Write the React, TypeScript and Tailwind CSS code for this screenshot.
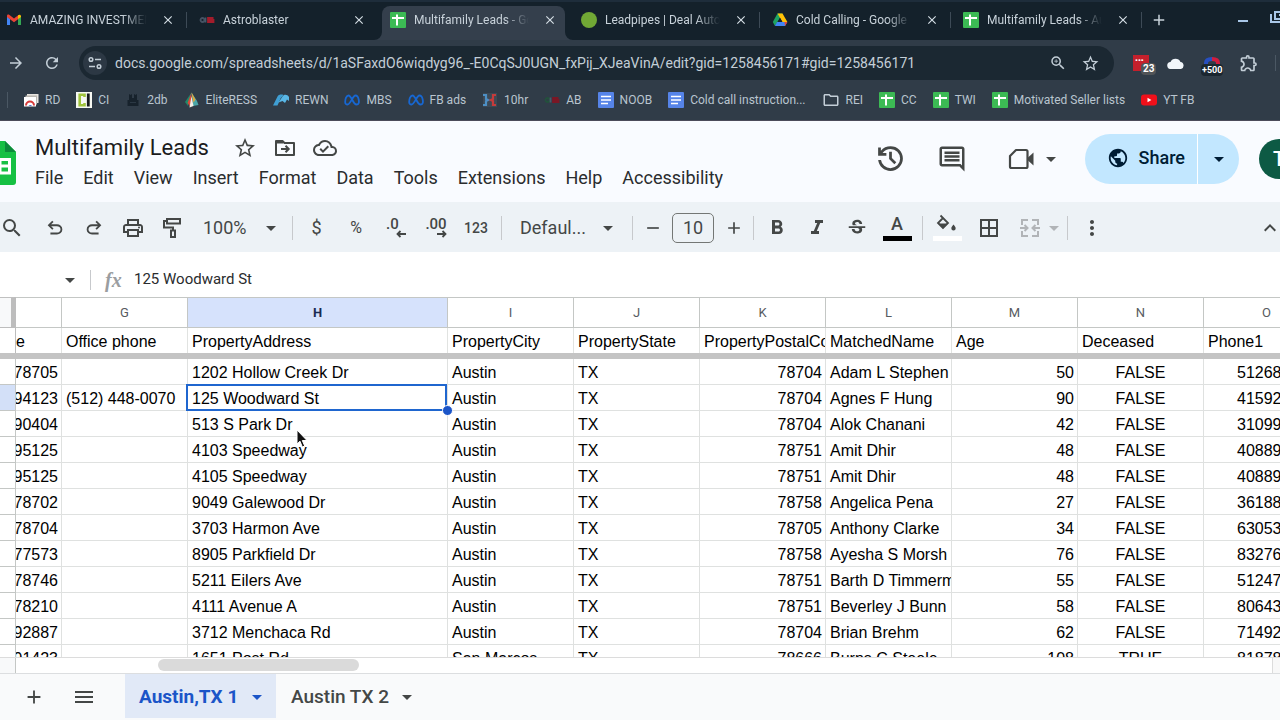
import type { ReactNode } from "react";
import clsx from "clsx";
import {
  MdAdd,
  MdArrowDropDown,
  MdArrowForward,
  MdBorderAll,
  MdClose,
  MdFormatBold,
  MdFormatItalic,
  MdKeyboardArrowUp,
  MdMenu,
  MdMoreVert,
  MdOutlineCloudDone,
  MdOutlineComment,
  MdOutlineExtension,
  MdOutlineFolder,
  MdOutlinePrint,
  MdPublic,
  MdRefresh,
  MdRemove,
  MdSearch,
  MdStarBorder,
  MdStrikethroughS,
  MdZoomIn,
} from "react-icons/md";

/* ---------- favicons ---------- */

const SheetsFavicon = () => (
  <svg viewBox="0 0 16 16" className="size-4 shrink-0">
    <rect width="16" height="16" rx="1" fill="#3cba54" />
    <path d="M2 6h12M7 2.500v11" stroke="#fff" strokeWidth="2" />
  </svg>
);

const DocsFavicon = () => (
  <svg viewBox="0 0 16 16" className="size-4 shrink-0">
    <rect width="16" height="16" rx="1" fill="#5684e8" />
    <path d="M3 4.500h10M3 8h10M3 11.500h7" stroke="#fff" strokeWidth="1.600" />
  </svg>
);

const GmailFavicon = () => (
  <svg viewBox="0 0 16 16" className="size-4 shrink-0">
    <path d="M1 13V4.500L4 7v6z" fill="#4285f4" />
    <path d="M15 13V4.500L12 7v6z" fill="#34a853" />
    <path d="M1 5V4c0-1.500 1.500-1.800 2.500-1L8 6.500 12.500 3 12 7.200 8 10.200 4 7.200z" fill="#ea4335" />
    <path d="M12 7.200V3.300c1.300-1.200 3-.6 3 .9V5z" fill="#fbbc04" />
  </svg>
);

const AstroFavicon = ({ dim = false }: { dim?: boolean }) => (
  <svg viewBox="0 0 16 16" className="size-4 shrink-0" fill="none" strokeWidth="1.800">
    <circle cx="3.500" cy="8" r="2" stroke={dim ? "#23513c" : "#455263"} />
    <path d="M6.500 10.500V5.500" stroke="#46596b" />
    <path d="M14.500 6H9v4h5.500V8H9" stroke={dim ? "#7a1725" : "#a31c2b"} />
  </svg>
);

const DriveFavicon = () => (
  <svg viewBox="0 0 16 16" className="size-4 shrink-0">
    <path d="M5.500 1.500h5L5.500 10 3 14 .8 10z" fill="#1ea362" />
    <path d="M5.500 1.500h5l4.900 8.500h-5z" fill="#ffc107" />
    <path d="M5 10h10.400L13 14H2.900z" fill="#4285f4" />
    <path d="M8 5.800L10.400 10H5.600z" fill="#14212b" />
    <path d="M12.500 10h2.900L13 14z" fill="#ea4335" />
  </svg>
);

const LeadpipesFavicon = () => <span className="size-4 shrink-0 rounded-full bg-[#71a835]" />;

const MetaIcon = () => (
  <svg viewBox="0 0 16 16" className="size-4 shrink-0" fill="none" stroke="#1767d2" strokeWidth="1.800">
    <path d="M1.200 10.500C1 7 2.500 3.500 4.500 3.500c3 0 4.500 9 8 9 2.500 0 2.700-2.500 2.200-5C14.200 5 13 3.500 11.500 3.500c-3 0-4.800 9-8 9-1.300 0-2.200-.8-2.300-2z" />
  </svg>
);

const RdIcon = () => (
  <svg viewBox="0 0 16 16" className="size-4 shrink-0">
    <rect x="4" y="2" width="11.500" height="9" fill="#e7e4df" />
    <rect x="2.500" y="3.500" width="11.500" height="9" fill="#b9b6b0" />
    <rect x="1" y="5" width="12" height="9.500" fill="#fff" />
    <path d="M3 13.500a4 4 0 0 1 8 0" fill="none" stroke="#d63a3a" strokeWidth="2" />
    <path d="M5.500 14a2 2 0 0 1 3.500 0z" fill="#4a6fd0" />
  </svg>
);

const CiIcon = () => (
  <svg viewBox="0 0 16 16" className="size-4 shrink-0">
    <rect width="16" height="16" fill="#f6f8f2" />
    <path d="M8.500 5V2.800H3.700v10.400h4.800V11" fill="none" stroke="#9fc33b" strokeWidth="2.600" />
    <path d="M12.300 1.500v13" stroke="#161a1c" strokeWidth="2.800" />
  </svg>
);

const DbIcon = () => (
  <svg viewBox="0 0 16 16" className="size-4 shrink-0" fill="#17222c">
    <path d="M4 2l1.500 1 1.500-1v4h2V2l1.500 1L12 2v6H4zM2.500 8h11v6h-11z" />
    <path d="M5 10.500h6" stroke="#2b3844" />
  </svg>
);

const EliteIcon = () => (
  <svg viewBox="0 0 16 16" className="size-4 shrink-0">
    <path d="M7.500.5L1 10l3 4z" fill="#1f8a6a" />
    <path d="M7.500.5L3.500 11l3.500 4.500z" fill="#d8483a" />
    <path d="M7.500.5l5.500 8.500 1.500 4L9 14z" fill="#4aa6a8" />
    <path d="M7.500.5l4 7-2 3z" fill="#e0a93a" />
    <path d="M7.500 4L5.500 15.500l4-1.500z" fill="#f4efe6" />
  </svg>
);

const RewnIcon = () => (
  <svg viewBox="0 0 16 16" className="size-4 shrink-0">
    <path d="M0 13.500L4.500 4.500c1-2 4-2.500 6-1.500L7.500 6.500 4.500 13.500z" fill="#3f9fd4" />
    <path d="M5.500 10.500L9.500 4.500c1.500-2.500 5-2 6.500.5v4l-2-1.500-2 3.500-2.500-2z" fill="#59b7e6" />
  </svg>
);

const TenHrIcon = () => (
  <svg viewBox="0 0 16 16" className="size-4 shrink-0" fill="none" strokeWidth="2.200">
    <rect x="1" y="1" width="14" height="14" fill="#3d4955" />
    <path d="M1 3h3v4l2 1-2 1v4H1" stroke="#4d8fc4" />
    <path d="M14 3h-3v4L9 8l2 1v4h3" stroke="#c43b3b" />
  </svg>
);

const YoutubeIcon = () => (
  <svg viewBox="0 0 16 16" className="size-4 shrink-0">
    <rect y="2.500" width="16" height="11" rx="3" fill="#f0101a" />
    <path d="M6.500 5.700v4.600L10.400 8z" fill="#fff" />
  </svg>
);

/* ---------- drawn toolbar icons ---------- */

const SheetsLogo = () => (
  <svg viewBox="0 0 32 44" className="-ml-4 h-11 w-8 shrink-0">
    <path d="M3 0h18l11 11v30a3 3 0 0 1-3 3H3a3 3 0 0 1-3-3V3a3 3 0 0 1 3-3z" fill="#16c043" />
    <path d="M21 0l11 11H21z" fill="#0c8a3a" />
    <path d="M7 18.500h18.500v13.500H7zM7 25h18.500M16 18.500V32" fill="none" stroke="#fff" strokeWidth="3" />
  </svg>
);

const UndoIcon = ({ flip = false }: { flip?: boolean }) => (
  <svg viewBox="0 0 24 24" className={clsx("size-[22px]", flip && "-scale-x-100")} fill="currentColor">
    <path d="M7 19v-2h7.100q1.575 0 2.738-1T18 13.500T16.838 11T14.100 10H7.800l2.600 2.600L9 14L4 9l5-5l1.400 1.400L7.800 8h6.300q2.425 0 4.163 1.575T20 13.500t-1.737 3.925T14.100 19z" />
  </svg>
);

const HistoryIcon = () => (
  <svg viewBox="0 0 24 24" className="size-[33px]" fill="currentColor">
    <path d="M12 21q-3.450 0-6.012-2.287T3.050 13H5.100q.35 2.600 2.313 4.300T12 19q2.925 0 4.963-2.037T19 12t-2.037-4.962T12 5q-1.725 0-3.225.8T6.250 8H9v2H3V4h2v2.350q1.275-1.600 3.113-2.475T12 3q1.875 0 3.513.713t2.850 1.924t1.925 2.850T21 12t-.712 3.513t-1.925 2.850t-2.850 1.925T12 21m2.800-4.800L11 12.400V7h2v4.600l3.200 3.200z" />
  </svg>
);

const FolderMoveIcon = () => (
  <svg viewBox="0 0 24 24" className="size-6" fill="none" stroke="currentColor" strokeWidth="2">
    <path d="M3 5h6.500l2 2H21v12H3z" strokeLinejoin="round" />
    <path d="M3 6h7" strokeWidth="3" />
    <path d="M8 13h7M12.500 9.800l3.200 3.200-3.200 3.200" />
  </svg>
);

const MeetIcon = () => (
  <svg viewBox="0 0 28 24" className="h-6 w-7">
    <path d="M9 3h10a1.500 1.500 0 0 1 1.500 1.500v15A1.500 1.500 0 0 1 19 21H4.500A1.500 1.500 0 0 1 3 19.500V9z" fill="none" stroke="currentColor" strokeWidth="2.200" strokeLinejoin="round" />
    <path d="M21 10.500l5.500-5v13L21 13.500z" fill="currentColor" />
  </svg>
);

const RollerIcon = () => (
  <svg viewBox="0 0 24 24" className="size-6" fill="none" stroke="currentColor" strokeWidth="2">
    <path d="M7 3h13v4.500H7zM7 5H4v6.500h9V14M11 14.500h4V21h-4z" />
  </svg>
);

const BucketIcon = () => (
  <svg viewBox="0 0 24 20" className="h-5 w-6">
    <path d="M5.500 1.500L13 9l-5 5-5-5 5.500-5.500" fill="none" stroke="currentColor" strokeWidth="1.800" />
    <path d="M3 9.500h10L8 14.500z" fill="currentColor" />
    <path d="M18.500 10.500c1.500 1.800 2.200 2.800 2.200 3.700a2.200 2.200 0 0 1-4.400 0c0-.9.700-1.900 2.200-3.700z" fill="currentColor" />
  </svg>
);

const MergeIcon = () => (
  <svg viewBox="0 0 24 24" className="size-6" fill="none" stroke="currentColor" strokeWidth="2">
    <path d="M10 4H4v5M14 4h6v5M4 15v5h6M20 15v5h-6M2 12h7M6.500 9l3 3-3 3M22 12h-7M17.500 9l-3 3 3 3" />
  </svg>
);

const TuneIcon = () => (
  <svg viewBox="0 0 16 16" className="size-4" fill="none" stroke="currentColor" strokeWidth="1.500">
    <circle cx="4" cy="4.500" r="1.800" />
    <circle cx="12" cy="11.500" r="1.800" />
    <path d="M8 4.500h6M2 11.500h6" />
  </svg>
);

const DecimalIcon = ({ digits, right = false }: { digits: string; right?: boolean }) => (
  <span className="flex h-6 flex-col text-left">
    <span className="text-[15px] leading-4 font-medium">{digits}</span>
    <svg viewBox="0 0 10 8" className={clsx("-mt-0.5 h-2 w-2.5 self-end", !right && "ml-2.5")} fill="none" stroke="currentColor" strokeWidth="1.800">
      <path d={right ? "M0 4h9M5.500 1l3 3-3 3" : "M10 4H1M4.500 1l-3 3 3 3"} />
    </svg>
  </span>
);

/* ---------- browser chrome ---------- */

type BrowserTab = { title: string; icon: ReactNode; active?: boolean; divider?: boolean };

const browserTabs: BrowserTab[] = [
  { title: "AMAZING INVESTMENT", icon: <GmailFavicon />, divider: true },
  { title: "Astroblaster", icon: <AstroFavicon /> },
  { title: "Multifamily Leads - Goo", icon: <SheetsFavicon />, active: true },
  { title: "Leadpipes | Deal Autom", icon: <LeadpipesFavicon />, divider: true },
  { title: "Cold Calling - Google D", icon: <DriveFavicon />, divider: true },
  { title: "Multifamily Leads - Aus", icon: <SheetsFavicon />, divider: true },
];

const TabStrip = () => (
  <div className="flex h-10 items-center border-t-2 border-[#1e2d3b] bg-[#14212b]">
    {browserTabs.map((tab, i) => (
      <div
        key={tab.title}
        className={clsx("relative flex h-full items-center pr-3 pb-0.5", i === 0 ? "w-[187px] pl-1.5" : "w-[191px] pl-3")}
      >
        {tab.active && (
          <>
            <span className="absolute inset-x-1 top-1 bottom-0 rounded-t-lg bg-[#343f4c]" />
            <svg viewBox="0 0 8 8" className="absolute bottom-0 -left-1 size-2" fill="#343f4c">
              <path d="M8 0v8H0a8 8 0 0 0 8-8z" />
            </svg>
            <svg viewBox="0 0 8 8" className="absolute -right-1 bottom-0 size-2" fill="#343f4c">
              <path d="M0 0v8h8a8 8 0 0 1-8-8z" />
            </svg>
          </>
        )}
        <div className="relative flex min-w-0 flex-1 items-center gap-2">
          {tab.icon}
          <span className="min-w-0 flex-1 overflow-hidden mask-r-from-75% mask-r-to-95% text-xs whitespace-nowrap text-[#c8d2da]">
            {tab.title}
          </span>
          <button aria-label={`Close ${tab.title}`} className="text-[#d5dee5]">
            <MdClose className="size-3.5" />
          </button>
        </div>
        {tab.divider && <span className="absolute top-2.5 right-0 h-4 w-px bg-[#3d4a56]" />}
      </div>
    ))}
    <button aria-label="New tab" className="ml-2 pb-0.5 text-[#c8d2da]">
      <MdAdd className="size-[18px]" />
    </button>
    <div className="-mr-1.5 ml-auto flex items-center gap-[22px] text-[#a9c7e8]">
      <button aria-label="Minimize" className="h-0.5 w-2.5 bg-current" />
      <button aria-label="Restore" className="-mt-2">
        <svg viewBox="0 0 16 12" className="h-3 w-4" fill="none" stroke="currentColor" strokeWidth="2">
          <path d="M5 1h10v7H5zM1 3v8h10M9 4h4" />
        </svg>
      </button>
    </div>
  </div>
);

const AddressBar = () => (
  <div className="flex h-[46px] items-center bg-[#303c48] text-[#c3ced7]">
    <button aria-label="Forward" className="ml-[7px]">
      <MdArrowForward className="size-[18px]" />
    </button>
    <button aria-label="Reload" className="ml-[18px]">
      <MdRefresh className="size-[18px]" />
    </button>
    <div className="ml-[18px] flex h-[34px] min-w-0 flex-1 items-center rounded-full bg-[#1b2832] pr-3.5 pl-1">
      <button aria-label="View site information" className="flex size-6 items-center justify-center rounded-full bg-[#2c3844]">
        <TuneIcon />
      </button>
      <input
        aria-label="Address"
        className="ml-2 min-w-0 flex-1 bg-transparent text-sm text-[#c3ced7] outline-none"
        defaultValue="docs.google.com/spreadsheets/d/1aSFaxdO6wiqdyg96_-E0CqSJ0UGN_fxPij_XJeaVinA/edit?gid=1258456171#gid=1258456171"
      />
      <button aria-label="Zoom">
        <MdZoomIn className="size-[18px]" />
      </button>
      <button aria-label="Bookmark this page" className="ml-3.5">
        <MdStarBorder className="size-[19px]" />
      </button>
    </div>
    <div className="ml-[19px] flex items-center gap-[18px]">
      <button aria-label="Password manager" className="relative size-4 bg-[#c4202c]">
        <span className="absolute top-0 left-0.5 text-[8px] leading-3 font-bold text-white">•••</span>
        <span className="absolute top-2 left-2 rounded-sm bg-[#515457] px-0.5 text-[10px] leading-3 font-bold text-white">23</span>
      </button>
      <button aria-label="Cloud">
        <svg viewBox="0 0 18 12" className="h-3 w-[18px]" fill="#f1f6fa">
          <path d="M4 12a3.500 3.500 0 0 1-.5-7A5.500 5.500 0 0 1 13.500 5 3.600 3.600 0 0 1 14 12z" />
        </svg>
      </button>
      <button aria-label="Magnet" className="relative size-[18px]">
        <svg viewBox="0 0 18 12" className="h-3 w-[18px]" fill="none" strokeWidth="4">
          <path d="M3 10V6q0-4 6-4" stroke="#274fc0" />
          <path d="M9 2q6 0 6 4v4" stroke="#d01d3f" />
        </svg>
        <span className="absolute top-2.5 -left-0.5 rounded-sm bg-[#1b2630] px-px text-[9px] leading-3 font-bold text-white">+500</span>
      </button>
      <button aria-label="Extensions">
        <MdOutlineExtension className="size-5" />
      </button>
    </div>
    <span className="mr-1 ml-4 h-4 w-px bg-[#4b5864]" />
  </div>
);

const bookmarks: { label: string; icon: ReactNode }[] = [
  { label: "RD", icon: <RdIcon /> },
  { label: "CI", icon: <CiIcon /> },
  { label: "2db", icon: <DbIcon /> },
  { label: "EliteRESS", icon: <EliteIcon /> },
  { label: "REWN", icon: <RewnIcon /> },
  { label: "MBS", icon: <MetaIcon /> },
  { label: "FB ads", icon: <MetaIcon /> },
  { label: "10hr", icon: <TenHrIcon /> },
  { label: "AB", icon: <AstroFavicon dim /> },
  { label: "NOOB", icon: <DocsFavicon /> },
  { label: "Cold call instruction...", icon: <DocsFavicon /> },
  { label: "REI", icon: <MdOutlineFolder className="size-[18px] text-[#c3ced7]" /> },
  { label: "CC", icon: <SheetsFavicon /> },
  { label: "TWI", icon: <SheetsFavicon /> },
  { label: "Motivated Seller lists", icon: <SheetsFavicon /> },
  { label: "YT FB", icon: <YoutubeIcon /> },
];

const BookmarksBar = () => (
  <nav className="flex items-center gap-4 overflow-hidden border-b border-[#4c4b5a] bg-[#303c48] pb-1.5 pl-[7px]">
    <span className="-mr-px h-4 w-px shrink-0 bg-[#4b5864]" />
    {bookmarks.map((b) => (
      <a key={b.label} href="#" className="flex h-7 shrink-0 items-center gap-1.5 text-xs text-[#b9c5cf]">
        {b.icon}
        {b.label}
      </a>
    ))}
  </nav>
);

/* ---------- document header ---------- */

const menus = ["File", "Edit", "View", "Insert", "Format", "Data", "Tools", "Extensions", "Help", "Accessibility"];

const DocHeader = () => (
  <header className="flex h-[81px] shrink-0 items-start bg-[#f9fbff] text-[#444746]">
    <div className="mt-5">
      <SheetsLogo />
    </div>
    <div className="ml-[19px] pt-2.5">
      <div className="flex h-[34px] items-center gap-4">
        <input
          aria-label="Rename"
          className="w-[182px] bg-transparent pb-0.5 text-[22px] text-[#1b1b1d] outline-none"
          defaultValue="Multifamily Leads"
        />
        <button aria-label="Star">
          <MdStarBorder className="size-6" />
        </button>
        <button aria-label="Move">
          <FolderMoveIcon />
        </button>
        <button aria-label="See document status">
          <MdOutlineCloudDone className="size-6" />
        </button>
      </div>
      <nav className="flex h-[26px] items-center gap-5 text-lg text-[#2a2c2e]">
        {menus.map((m) => (
          <button key={m}>{m}</button>
        ))}
      </nav>
    </div>
    <div className="-mr-[19px] ml-auto flex h-[75px] shrink-0 items-center">
      <button aria-label="Version history">
        <HistoryIcon />
      </button>
      <button aria-label="Comments" className="ml-[30px]">
        <MdOutlineComment className="size-[30px]" />
      </button>
      <button aria-label="Start a call" className="ml-10 flex items-center gap-1">
        <MeetIcon />
        <MdArrowDropDown className="size-6" />
      </button>
      <div className="ml-[22px] flex h-[50px] overflow-hidden rounded-full bg-[#c2e7ff] text-[#001d35]">
        <button className="flex items-center gap-2.5 pr-3 pb-0.5 pl-[22px] text-lg font-medium">
          <MdPublic className="size-[22px]" />
          Share
        </button>
        <button aria-label="Quick sharing actions" className="w-[42px] border-l border-white">
          <MdArrowDropDown className="mx-auto size-6" />
        </button>
      </div>
      <button aria-label="Account" className="ml-5 size-10 rounded-full bg-[#0d5a44] text-xl font-medium text-white">
        T
      </button>
    </div>
  </header>
);

/* ---------- toolbar ---------- */

const Divider = () => <span className="h-6 w-px shrink-0 bg-[#c7c9cc]" />;

const ToolButton = ({ label, className, children }: { label: string; className?: string; children: ReactNode }) => (
  <button aria-label={label} className={clsx("flex h-10 shrink-0 items-center justify-center", className ?? "w-10")}>
    {children}
  </button>
);

const Toolbar = () => (
  <div className="flex h-[50px] shrink-0 items-center bg-[#edf2f6] pt-px text-[#444746]">
    <ToolButton label="Search the menus" className="w-[35px] pr-[11px]">
      <MdSearch className="size-6" />
    </ToolButton>
    <ToolButton label="Undo" className="w-[39px]">
      <UndoIcon />
    </ToolButton>
    <ToolButton label="Redo" className="w-[39px]">
      <UndoIcon flip />
    </ToolButton>
    <ToolButton label="Print" className="w-[39px]">
      <MdOutlinePrint className="size-6" />
    </ToolButton>
    <ToolButton label="Paint format" className="w-[39px]">
      <RollerIcon />
    </ToolButton>
    <div className="relative ml-3 flex items-center">
      <select aria-label="Zoom" className="w-20 appearance-none bg-transparent text-lg outline-none">
        <option>100%</option>
      </select>
      <MdArrowDropDown className="pointer-events-none absolute right-0 size-6" />
    </div>
    <span className="w-[9px]" />
    <Divider />
    <span className="w-1" />
    <ToolButton label="Format as currency" className="w-[39px]">
      <span className="text-lg">$</span>
    </ToolButton>
    <ToolButton label="Format as percent">
      <span className="text-base">%</span>
    </ToolButton>
    <ToolButton label="Decrease decimal places">
      <DecimalIcon digits=".0" />
    </ToolButton>
    <ToolButton label="Increase decimal places">
      <DecimalIcon digits=".00" right />
    </ToolButton>
    <ToolButton label="More formats">
      <span className="text-sm font-medium">123</span>
    </ToolButton>
    <span className="w-[5px]" />
    <Divider />
    <div className="relative ml-[18px] flex items-center">
      <select aria-label="Font" className="w-[100px] appearance-none bg-transparent text-lg outline-none">
        <option>Defaul...</option>
      </select>
      <MdArrowDropDown className="pointer-events-none absolute right-0 size-6" />
    </div>
    <span className="w-3" />
    <Divider />
    <ToolButton label="Decrease font size" className="w-[39px]">
      <MdRemove className="size-5" />
    </ToolButton>
    <input
      aria-label="Font size"
      className="h-[30px] w-[42px] shrink-0 rounded-[5px] border border-[#747775] bg-transparent text-center text-lg outline-none"
      defaultValue="10"
    />
    <ToolButton label="Increase font size" className="w-[39px]">
      <MdAdd className="size-5" />
    </ToolButton>
    <Divider />
    <span className="w-[3px]" />
    <ToolButton label="Bold">
      <MdFormatBold className="size-6" />
    </ToolButton>
    <ToolButton label="Italic">
      <MdFormatItalic className="size-6" />
    </ToolButton>
    <ToolButton label="Strikethrough">
      <MdStrikethroughS className="size-[22px]" />
    </ToolButton>
    <ToolButton label="Text color">
      <span className="flex w-[29px] flex-col items-center border-b-[5px] border-black pb-0.5 text-lg leading-5 font-medium">A</span>
    </ToolButton>
    <span className="w-[5px]" />
    <Divider />
    <span className="w-1" />
    <ToolButton label="Fill color">
      <span className="flex w-[29px] flex-col items-center border-b-[5px] border-white pb-0.5">
        <BucketIcon />
      </span>
    </ToolButton>
    <ToolButton label="Borders" className="w-11">
      <MdBorderAll className="size-6" />
    </ToolButton>
    <ToolButton label="Merge cells" className="ml-1.5 w-[50px] text-[#b1b4b7]">
      <MergeIcon />
      <MdArrowDropDown className="size-6" />
    </ToolButton>
    <Divider />
    <ToolButton label="More" className="w-12">
      <MdMoreVert className="size-6" />
    </ToolButton>
    <ToolButton label="Hide the menus" className="-mr-0.5 ml-auto w-6">
      <MdKeyboardArrowUp className="size-6" />
    </ToolButton>
  </div>
);

const FormulaBar = () => (
  <div className="flex h-[45px] shrink-0 items-center bg-white pt-2.5">
    <button aria-label="Name box" className="ml-[58px] text-[#444746]">
      <MdArrowDropDown className="size-6" />
    </button>
    <span className="ml-2 h-5 w-px bg-[#c7c9cc]" />
    <label htmlFor="formula" className="ml-3.5 w-[17px] font-['Liberation_Serif',serif] text-xl leading-5 font-bold text-[#9a9da0] italic">
      fx
    </label>
    <input
      id="formula"
      className="ml-3 min-w-0 flex-1 bg-transparent text-[15px] text-[#2a2c2e] outline-none"
      defaultValue="125 Woodward St"
    />
  </div>
);

/* ---------- grid ---------- */

const letters = ["", "G", "H", "I", "J", "K", "L", "M", "N", "O"];
const fields = ["e", "Office phone", "PropertyAddress", "PropertyCity", "PropertyState", "PropertyPostalCo", "MatchedName", "Age", "Deceased", "Phone1"];

// zip, office phone, address, city, state, postal code, name, age, deceased, phone
const rows: string[][] = [
  ["78705", "", "1202 Hollow Creek Dr", "Austin", "TX", "78704", "Adam L Stephen", "50", "FALSE", "5126800000"],
  ["94123", "(512) 448-0070", "125 Woodward St", "Austin", "TX", "78704", "Agnes F Hung", "90", "FALSE", "4159200000"],
  ["90404", "", "513 S Park Dr", "Austin", "TX", "78704", "Alok Chanani", "42", "FALSE", "3109900000"],
  ["95125", "", "4103 Speedway", "Austin", "TX", "78751", "Amit Dhir", "48", "FALSE", "4088900000"],
  ["95125", "", "4105 Speedway", "Austin", "TX", "78751", "Amit Dhir", "48", "FALSE", "4088900000"],
  ["78702", "", "9049 Galewood Dr", "Austin", "TX", "78758", "Angelica Pena", "27", "FALSE", "3618800000"],
  ["78704", "", "3703 Harmon Ave", "Austin", "TX", "78705", "Anthony Clarke", "34", "FALSE", "6305300000"],
  ["77573", "", "8905 Parkfield Dr", "Austin", "TX", "78758", "Ayesha S Morsh", "76", "FALSE", "8327600000"],
  ["78746", "", "5211 Eilers Ave", "Austin", "TX", "78751", "Barth D Timmerm", "55", "FALSE", "5124700000"],
  ["78210", "", "4111 Avenue A", "Austin", "TX", "78751", "Beverley J Bunn", "58", "FALSE", "8064300000"],
  ["92887", "", "3712 Menchaca Rd", "Austin", "TX", "78704", "Brian Brehm", "62", "FALSE", "7149200000"],
  ["91423", "", "1651 Post Rd", "San Marcos", "TX", "78666", "Burns C Steele", "108", "TRUE", "8187800000"],
];

const numeric = [0, 5, 7, 9];
const selected = { row: 1, col: 2 };

const Grid = () => (
  <div className="relative min-h-0 flex-1 overflow-hidden bg-white">
    <table className="w-[1330px] table-fixed border-separate border-spacing-0 font-['Liberation_Sans',Arial,sans-serif] text-base text-black">
      <colgroup>
        <col className="w-4" />
        <col className="w-[46px]" />
        <col className="w-[126px]" />
        <col className="w-[260px]" />
        {letters.slice(3).map((l) => (
          <col key={l} className="w-[126px]" />
        ))}
      </colgroup>
      <thead>
        <tr className="h-[31px] font-[Roboto,sans-serif] text-[13px] text-[#575b5f]">
          <th className="border-t border-r-[5px] border-b border-[#bdbdbd] border-t-[#c0c0c0] bg-[#f8f9fa]" />
          {letters.map((l, i) => (
            <th
              key={i}
              className={clsx(
                "border-y border-r border-[#c4c7c5] p-0 pt-px",
                i === selected.col ? "bg-[#d6e2fc] font-bold text-[#1a2b52]" : "font-normal",
              )}
            >
              {l}
            </th>
          ))}
        </tr>
        <tr className="h-[25px]">
          <th className="border-r border-[#bdbdbd] p-0" />
          {fields.map((f, i) => (
            <th key={f} className="overflow-hidden border-r border-[#e1e3e1] p-0 pt-[3px] text-left leading-[22px] font-normal whitespace-nowrap">
              <div className={clsx("overflow-hidden", i > 0 && "pl-1")}>{f}</div>
            </th>
          ))}
        </tr>
        <tr className="h-1.5">
          <td colSpan={11} className="bg-[#c4c4c4] p-0" />
        </tr>
      </thead>
      <tbody>
        {rows.map((row, r) => (
          <tr key={r} className="h-[26px]">
            <th className={clsx("border-r border-b border-[#c4c7c5] p-0", r === selected.row && "bg-[#d3e0f8]")} />
            {row.map((value, c) => (
              <td key={c} className="relative border-r border-b border-[#dfe1e0] p-0 pt-[3px] leading-[22px]">
                <div
                  className={clsx(
                    "flex overflow-hidden whitespace-nowrap",
                    numeric.includes(c) ? "justify-end pr-[3px]" : c === 8 ? "justify-center" : "pl-1",
                  )}
                >
                  {value}
                </div>
                {r === selected.row && c === selected.col && (
                  <>
                    <span className="absolute -top-px right-0 -bottom-px -left-0.5 z-10 border-2 border-[#1f66cf]" />
                    <span className="absolute -right-1.5 -bottom-1.5 z-20 size-[11px] rounded-full border border-white bg-[#1b55c8]" />
                  </>
                )}
              </td>
            ))}
          </tr>
        ))}
      </tbody>
    </table>
    <svg viewBox="0 0 12 19" className="absolute top-[132px] left-[296px] z-30 h-[19px] w-3">
      <path d="M1 1v14l3-2.800L6.300 18l2.400-1-2.400-5.500H11z" fill="#111" stroke="#fff" strokeWidth="1" />
    </svg>
  </div>
);

const ScrollBar = () => (
  <div className="flex h-4 shrink-0 items-start border-t border-[#dcdcdc] bg-white">
    <span className="h-full w-4 border-r border-[#c4c7c5] bg-[#f8f9fa]" />
    <span className="mt-px ml-[142px] h-3 w-[201px] rounded-full bg-[#dadada]" />
    <span className="ml-auto h-full w-2 border-l border-[#dcdcdc] bg-[#f8f8f8]" />
  </div>
);

const SheetTabs = () => (
  <footer className="flex h-[47px] shrink-0 border-t border-[#dcdee0] bg-[#f9fafb] text-[19px] font-medium text-[#444746]">
    <button aria-label="Add sheet" className="ml-[23px]">
      <MdAdd className="size-[22px]" />
    </button>
    <button aria-label="All sheets" className="ml-[27px]">
      <MdMenu className="size-6" />
    </button>
    <button className="mb-0.5 ml-[29px] flex w-[151px] items-center justify-between bg-[#e1e9f7] pt-0.5 pr-[7px] pl-3.5 text-[#1b55c8]">
      <span className="font-bold">Austin,TX 1</span>
      <MdArrowDropDown className="size-6" />
    </button>
    <button className="mb-0.5 flex w-[143px] items-center justify-between pt-0.5 pl-[15px]">
      <span>Austin TX 2</span>
      <MdArrowDropDown className="size-6" />
    </button>
  </footer>
);

const App = () => (
  <div className="flex h-screen flex-col overflow-hidden bg-white font-[Roboto,sans-serif]">
    <div className="shrink-0">
      <TabStrip />
      <AddressBar />
      <BookmarksBar />
    </div>
    <DocHeader />
    <Toolbar />
    <FormulaBar />
    <Grid />
    <ScrollBar />
    <SheetTabs />
  </div>
);

export default App;
